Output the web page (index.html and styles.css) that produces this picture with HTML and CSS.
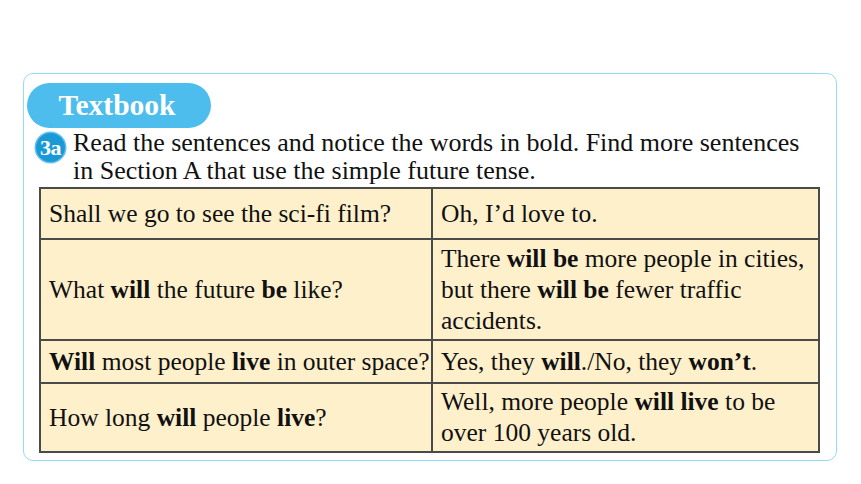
FILE: index.html
```html
<!DOCTYPE html>
<html>
<head>
<meta charset="utf-8">
<link rel="stylesheet" href="styles.css">
</head>
<body>
<div class="box">
  <div class="pill">Textbook</div>
  <div class="task">
    <div class="num">3a</div>
    <p class="instr">Read the sentences and notice the words in bold. Find more sentences in Section A that use the simple future tense.</p>
  </div>
  <table class="grid">
    <tr class="r1">
      <td class="c1">Shall we go to see the sci-fi film?</td>
      <td>Oh, I’d love to.</td>
    </tr>
    <tr class="r2">
      <td class="c1">What <b>will</b> the future <b>be</b> like?</td>
      <td>There <b>will be</b> more people in cities, but there <b>will be</b> fewer traffic accidents.</td>
    </tr>
    <tr class="r3">
      <td class="c1"><b>Will</b> most people <b>live</b> in outer space?</td>
      <td>Yes, they <b>will</b>./No, they <b>won’t</b>.</td>
    </tr>
    <tr class="r4">
      <td class="c1">How long <b>will</b> people <b>live</b>?</td>
      <td>Well, more people <b>will live</b> to be over 100 years old.</td>
    </tr>
  </table>
</div>
</body>
</html>
```
FILE: styles.css
```css
html, body {
  margin: 0;
  padding: 0;
  background: #ffffff;
}
body {
  width: 861px;
  height: 484px;
  overflow: hidden;
  font-family: "Liberation Serif", "Times New Roman", serif;
  color: #111111;
}
.box {
  box-sizing: border-box;
  margin: 73px 0 0 23px;
  width: 814px;
  height: 388px;
  border: 1.5px solid #93dbf6;
  border-radius: 10px;
}
.pill {
  box-sizing: border-box;
  margin: 8.5px 0 0 2.5px;
  width: 184px;
  height: 45px;
  border-radius: 23px;
  background: #4dbdee;
  color: #ffffff;
  font-weight: bold;
  font-size: 29.5px;
  line-height: 45px;
  padding-left: 32px;
}
.task {
  display: flex;
  align-items: flex-start;
  margin-top: 1px;
}
.num {
  flex: none;
  margin: 4px 0 0 12px;
  width: 29px;
  height: 29px;
  border-radius: 50%;
  background: #1b99d6;
  box-shadow: 0 0 0 1.5px #63c3ee;
  color: #ffffff;
  font-weight: bold;
  font-size: 22px;
  line-height: 29px;
  text-align: center;
  letter-spacing: -0.5px;
}
.instr {
  margin: 0 0 0 8px;
  width: 745px;
  font-size: 26px;
  line-height: 28px;
}
.grid {
  margin: 2px 0 0 15px;
  width: 781px;
  border-collapse: collapse;
  background: #fff0cc;
  border: 2px solid #3f3f3f;
  font-size: 25.5px;
  line-height: 31px;
}
.grid td {
  border: 2px solid #4a4a4a;
  padding: 0 8px;
  vertical-align: middle;
}
.grid td.c1 {
  width: 382px;
  padding: 0 0 0 8px;
  white-space: nowrap;
}
.r1 { height: 51px; }
.r2 { height: 101px; }
.r3 { height: 43px; }
.r4 { height: 69px; }
b { font-weight: bold; }
```
